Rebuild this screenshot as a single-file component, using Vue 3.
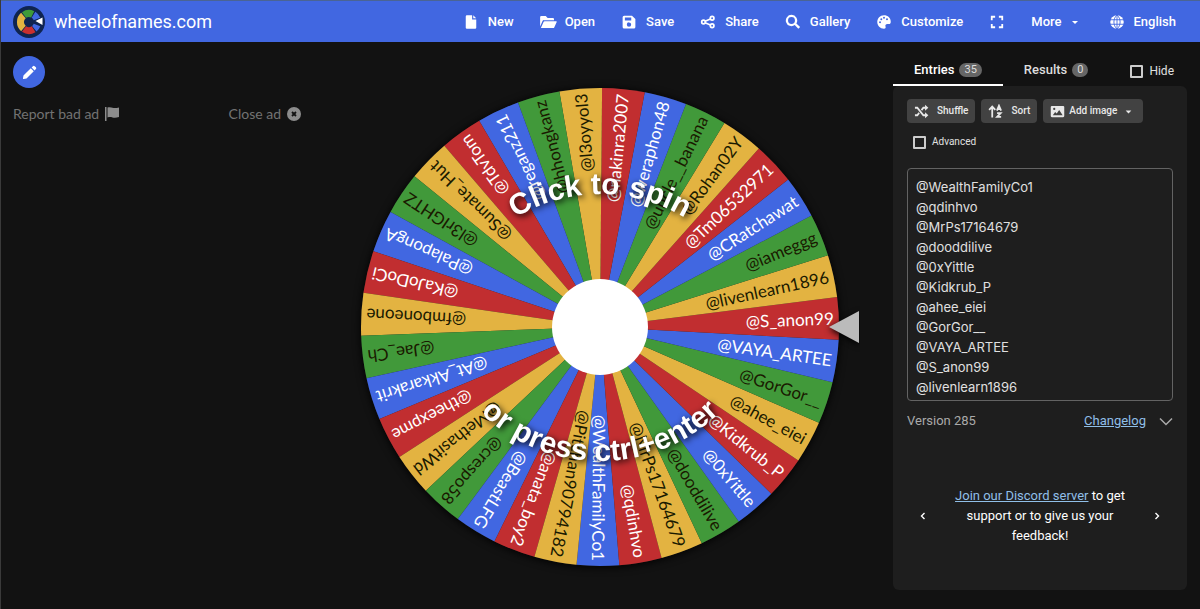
<script setup>
import { ref, computed } from 'vue'

const names = [
  '@WealthFamilyCo1', '@qdinhvo', '@MrPs17164679', '@dooddilive', '@0xYittle', '@Kidkrub_P',
  '@ahee_eiei', '@GorGor__', '@VAYA_ARTEE', '@S_anon99', '@livenlearn1896', '@iameggg',
  '@CRatchawat', '@Tm06532971', '@Rohan02Y', '@uncle__banana', '@weraphon48', '@nakinra2007',
  '@l3oyyol3', '@hhongkanz', '@reganz211', '@TdvTom', '@Sumate_Hut', '@l3rIGHTZ',
  '@PalapongA', '@KaJoDoCi', '@fmboneone', '@Jae_Ch', '@At_Akkarakrit', '@theexpme',
  '@MethasitWd', '@crespo58', '@BeastLFG', '@anata_boy2', '@Pitchan90794182'
]
const text = ref(names.join('\n'))
const entries = computed(() => text.value.split('\n').filter(Boolean))
const hidden = ref(false)
const advanced = ref(false)

const RADIUS = 239
const START = 90.5
const tones = ['blue', 'red', 'yellow', 'green']

function point(deg) {
  const a = (deg * Math.PI) / 180
  return `${(RADIUS * Math.cos(a)).toFixed(2)} ${(RADIUS * Math.sin(a)).toFixed(2)}`
}

const slices = computed(() => {
  const step = 360 / entries.value.length
  return entries.value.map((name, i) => {
    const angle = START - i * step
    return {
      name,
      tone: tones[i % 4],
      path: `M0 0L${point(angle - step / 2)}A${RADIUS} ${RADIUS} 0 0 1 ${point(angle + step / 2)}Z`,
      turn: `rotate(${angle.toFixed(3)})`
    }
  })
})

const menu = [
  { label: 'New', d: 'M6.500 3h7v5.500h5.500V19.500a1.500 1.500 0 0 1-1.500 1.500h-11a1.500 1.500 0 0 1-1.500-1.500v-15A1.500 1.500 0 0 1 6.500 3zM15 3l4 4h-4z' },
  { label: 'Open', d: 'M1.500 18V5.500A1.500 1.500 0 0 1 3 4h6l2.500 2.500h7A1.500 1.500 0 0 1 20 8v1.500H6.500a2 2 0 0 0-1.800 1.100zM2.500 20l3.700-8.200a1.500 1.500 0 0 1 1.300-.8H23a.7.7 0 0 1 .6 1l-3.300 7.200a1.500 1.500 0 0 1-1.300.8z' },
  { label: 'Save', d: 'M5.500 3.500H16l4.500 4.500v10.500a2 2 0 0 1-2 2h-13a2 2 0 0 1-2-2v-13a2 2 0 0 1 2-2zM6.500 6v4h8.500V6zM12 12.500a2.900 2.900 0 1 0 0 5.800 2.900 2.900 0 0 0 0-5.800z' },
  { label: 'Share', share: true },
  { label: 'Gallery', d: 'M10 2.500a7.500 7.500 0 1 0 4.300 13.600l4.800 5 2.400-2.400-5-4.800A7.500 7.500 0 0 0 10 2.500zm0 2.900a4.600 4.600 0 1 1 0 9.200 4.600 4.600 0 0 1 0-9.200z' },
  { label: 'Customize', d: 'M12 3C6.700 3 3 7.200 3 12s4 9 9 9c2.200 0 2.600-1.500 2-3-.7-2 .5-3.300 2.500-3.300h2.300c1.300 0 2.200-1.300 2.200-3.100C21 6.600 17 3 12 3zM6.700 11a1.300 1.300 0 1 1 0 2.600 1.300 1.300 0 0 1 0-2.600zm1.700-4a1.300 1.300 0 1 1 0 2.600 1.300 1.300 0 0 1 0-2.600zM12 5a1.300 1.300 0 1 1 0 2.600A1.300 1.300 0 0 1 12 5zm4 2a1.300 1.300 0 1 1 0 2.600A1.300 1.300 0 0 1 16 7z' }
]
</script>

<template>
  <div class="page">
    <header class="bar">
      <a class="brand" href="#">
        <svg class="logo" viewBox="-16 -16 32 32" aria-hidden="true">
          <circle r="16" fill="#0f2450" />
          <g fill="none" stroke-width="7">
            <path d="M-5 -7A8.600 8.600 0 0 1 3.700 -7.700" stroke="#3f9a3a" />
            <path d="M-5.600 6.500A8.600 8.600 0 0 1 -5.600 -6.500" stroke="#e3b341" />
            <path d="M4.600 7.300A8.600 8.600 0 0 1 -5 7" stroke="#c9302f" />
            <path d="M4.500 -7.300A8.600 8.600 0 0 1 8 -3M8 3A8.600 8.600 0 0 1 5.300 6.800" stroke="#4167e1" />
          </g>
          <path d="M6.500 -1L13.500 -4.500V3z" fill="#fff" />
        </svg>
        <span>wheelofnames.com</span>
      </a>
      <nav class="menu">
        <button v-for="item in menu" :key="item.label" type="button" class="item">
          <svg class="icon" viewBox="0 0 24 24" aria-hidden="true">
            <g v-if="item.share" fill="none" stroke="currentColor" stroke-width="2.300">
              <circle cx="6" cy="12" r="2.400" /><circle cx="17.500" cy="7" r="2.400" /><circle cx="17.500" cy="17" r="2.400" />
              <path d="M8.200 11l7-3M8.200 13l7 3" />
            </g>
            <path v-else :d="item.d" fill="currentColor" fill-rule="evenodd" />
          </svg>
          <span>{{ item.label }}</span>
        </button>
        <button type="button" class="item" aria-label="Fullscreen">
          <svg class="icon" viewBox="0 0 24 24" aria-hidden="true">
            <path d="M5 9.500V5h4.500M14.500 5H19v4.500M19 14.500V19h-4.500M9.500 19H5v-4.500" fill="none" stroke="currentColor" stroke-width="2.400" />
          </svg>
        </button>
        <button type="button" class="item more">
          <span>More</span>
          <svg class="caret" viewBox="0 0 16 16" aria-hidden="true"><path d="M5 7h6l-3 3z" fill="currentColor" /></svg>
        </button>
        <button type="button" class="item">
          <svg class="icon" viewBox="0 0 24 24" aria-hidden="true">
            <circle cx="12" cy="12" r="9" fill="currentColor" />
            <path d="M2 9h20M2 15h20M12 2v20M12 2.500c-5.500 5-5.500 14 0 19M12 2.500c5.500 5 5.500 14 0 19" fill="none" stroke="#4167e1" stroke-width="1.200" />
          </svg>
          <span>English</span>
        </button>
      </nav>
    </header>

    <main class="main">
      <section class="left">
        <button type="button" class="edit" aria-label="Edit title">
          <svg viewBox="0 0 24 24" aria-hidden="true">
            <path d="M3.500 16.200L2.800 20.200a.8.800 0 0 0 1 1l4-.8L18 10.200 13.800 6zM21 7.200a1.800 1.800 0 0 0 0-2.500L19.300 3a1.800 1.800 0 0 0-2.500 0L15 4.800 19.200 9z" fill="currentColor" />
          </svg>
        </button>
        <div class="ads">
          <a href="#">Report bad ad
            <svg viewBox="0 0 14 14" aria-hidden="true"><path d="M0 0h1.500v14H0zM2.500 .6c2-.7 3.500-.3 5 .2 2 .6 4 .3 6.500-.4v9.600c-2.500.8-4.500 1-6.500.4-2-.5-3-.5-5 0z" fill="currentColor" /></svg>
          </a>
          <a href="#">Close ad
            <svg viewBox="0 0 14 14" aria-hidden="true"><circle cx="7" cy="7" r="7" fill="currentColor" /><path d="M5 5l4 4M9 5l-4 4" stroke="#121212" stroke-width="1.800" /></svg>
          </a>
        </div>
      </section>

      <section class="stage">
        <svg class="wheel" viewBox="-260 -260 520 520" role="img" aria-label="Wheel of names">
          <defs>
            <path id="arc-top" d="M-164 31A164 164 0 0 1 164 31" />
            <path id="arc-bottom" d="M-172 -38A172 172 0 0 0 172 -38" />
          </defs>
          <circle r="239" class="disc" />
          <path v-for="s in slices" :key="'p' + s.name" :d="s.path" :class="s.tone" />
          <g v-for="s in slices" :key="'t' + s.name" :transform="s.turn">
            <text x="234" y="6" class="name" :class="'on-' + s.tone">{{ s.name }}</text>
          </g>
          <circle r="48" fill="#fff" />
          <text class="hint"><textPath href="#arc-top" startOffset="50%">Click to spin</textPath></text>
          <text class="hint"><textPath href="#arc-bottom" startOffset="50%">or press ctrl+enter</textPath></text>
          <path d="M229 0L259 -16V16z" class="pointer" />
        </svg>
      </section>

      <aside class="side">
        <div class="tabs">
          <button type="button" class="tab active">Entries <span class="badge">{{ entries.length }}</span></button>
          <button type="button" class="tab">Results <span class="badge">0</span></button>
          <label class="check hide"><input v-model="hidden" type="checkbox">Hide</label>
        </div>
        <div class="panel">
          <div class="tools">
            <button type="button" class="tool">
              <svg viewBox="0 0 16 16" aria-hidden="true"><path d="M1 4h2.500L10 12h3M1 12h2.500l2-2.500M8 6.500L10 4h3" fill="none" stroke="currentColor" stroke-width="1.900" /><path d="M11.800 .7l3.500 3.300-3.500 3.300zM11.800 8.700l3.500 3.300-3.500 3.300z" fill="currentColor" /></svg>
              Shuffle
            </button>
            <button type="button" class="tool">
              <svg viewBox="0 0 16 16" aria-hidden="true"><path d="M4.500 14.500V3M1.200 6.200l3.300-3.500 3.300 3.500M9.500 7l2.200-5.200L14 7M10.200 5.500h3M9.700 9.800h3.800l-3.800 4h4.300" fill="none" stroke="currentColor" stroke-width="1.900" /></svg>
              Sort
            </button>
            <button type="button" class="tool image">
              <svg viewBox="0 0 16 16" aria-hidden="true"><path fill-rule="evenodd" d="M2 2h12A1.200 1.200 0 0 1 15.200 3.200v9.600a1.200 1.200 0 0 1-1.200 1.200h-12A1.200 1.200 0 0 1 .8 12.800v-9.600A1.200 1.200 0 0 1 2 2zM3 12h10.500L9.800 6.500 7.200 10 5.500 8.500zM4.500 4a1.200 1.200 0 1 0 0 2.400 1.200 1.200 0 0 0 0-2.400z" fill="currentColor" /></svg>
              Add image
              <svg class="drop" viewBox="0 0 16 16" aria-hidden="true"><path d="M5 7h6l-3 3z" fill="currentColor" /></svg>
            </button>
          </div>
          <label class="check advanced"><input v-model="advanced" type="checkbox">Advanced</label>
          <textarea v-model="text" class="list" aria-label="Entries" spellcheck="false"></textarea>
          <div class="version">
            <span>Version 285</span>
            <a href="#">Changelog</a>
            <button type="button" class="plain" aria-label="Expand">
              <svg viewBox="0 0 14 14" aria-hidden="true"><path d="M1 4.500l6 6 6-6" fill="none" stroke="currentColor" stroke-width="1.500" /></svg>
            </button>
          </div>
          <div class="tip">
            <button type="button" class="plain" aria-label="Previous"><svg viewBox="0 0 14 14" aria-hidden="true"><path d="M8.500 4L5.500 7l3 3" fill="none" stroke="currentColor" stroke-width="1.400" /></svg></button>
            <p><a href="#">Join our Discord server</a> to get support or to give us your feedback!</p>
            <button type="button" class="plain" aria-label="Next"><svg viewBox="0 0 14 14" aria-hidden="true"><path d="M5.500 4l3 3-3 3" fill="none" stroke="currentColor" stroke-width="1.400" /></svg></button>
          </div>
        </div>
      </aside>
    </main>
  </div>
</template>

<style>
body {
  background: #121212;
}
</style>

<style scoped>
.page {
  min-height: 100vh;
  display: flex;
  flex-direction: column;
  box-sizing: border-box;
  border-left: 1px solid #3a3a3a;
  background: #121212;
  color: #fff;
  font-family: Roboto, sans-serif;
  font-size: 13px;
  line-height: 20px;
}
button {
  font: inherit;
  color: inherit;
  border: 0;
  background: none;
  padding: 0;
  margin: 0;
  cursor: pointer;
}
a {
  color: #90bfe8;
}
svg {
  display: block;
  flex: none;
}
.bar {
  display: flex;
  align-items: center;
  justify-content: space-between;
  height: 42px;
  padding: 0 12px;
  box-sizing: border-box;
  border-top: 1px solid #4a6494;
  background: #4167e1;
}
.brand {
  display: flex;
  align-items: center;
  gap: 9px;
  color: #fff;
  font-size: 18px;
  text-decoration: none;
}
.logo {
  width: 32px;
  height: 32px;
}
.menu {
  display: flex;
  gap: 1px;
}
.item {
  display: flex;
  align-items: center;
  gap: 8px;
  padding: 8px 12px;
  font-weight: 500;
}
.more {
  gap: 5px;
}
.icon {
  width: 18px;
  height: 18px;
}
.caret {
  width: 16px;
  height: 16px;
}
.main {
  flex: 1;
  display: grid;
  grid-template-columns: 306px 1fr 307px;
}
.left {
  padding: 14px 6px 0 12px;
}
.edit {
  display: grid;
  place-items: center;
  width: 32px;
  height: 32px;
  border-radius: 50%;
  background: #4167e1;
}
.edit svg {
  width: 17px;
  height: 17px;
}
.ads {
  display: flex;
  justify-content: space-between;
  margin-top: 16px;
}
.ads a {
  display: flex;
  align-items: center;
  gap: 6px;
  color: #727272;
  font-family: Lato, sans-serif;
  font-size: 14px;
  text-decoration: none;
}
.ads svg {
  width: 14px;
  height: 14px;
  color: #8c8c8c;
}
.stage {
  display: flex;
  align-items: center;
  justify-content: center;
  padding-top: 3px;
}
.wheel {
  width: 100%;
  max-width: 520px;
}
.disc {
  fill: #222;
  filter: drop-shadow(0 1px 4px #000);
}
.blue { fill: #4167e1; }
.red { fill: #c12e30; }
.yellow { fill: #e3b341; }
.green { fill: #41993a; }
.name {
  font-family: Lato, sans-serif;
  font-size: 17px;
  text-anchor: end;
}
.on-blue, .on-red { fill: #fff; }
.on-yellow, .on-green { fill: #1a1a00; }
.hint {
  fill: #fff;
  font-family: "Liberation Sans", Arial, sans-serif;
  font-weight: 700;
  font-size: 30px;
  text-anchor: middle;
  filter: drop-shadow(2px 2px 3px #000);
}
.pointer {
  fill: #bbb;
  filter: drop-shadow(0 2px 3px #000);
}
.side {
  display: flex;
  flex-direction: column;
  padding: 14px 13px 19px 0;
}
.tabs {
  display: flex;
  align-items: stretch;
  height: 30px;
}
.tab {
  display: flex;
  align-items: center;
  gap: 5px;
  padding: 0 21px;
  border-bottom: 2px solid transparent;
  font-weight: 500;
  color: #ddd;
}
.tab.active {
  color: #fff;
  border-color: #fff;
}
.badge {
  padding: 0 5px;
  border-radius: 7px;
  background: #666;
  color: #ddd;
  font-size: 11px;
  font-weight: 400;
  line-height: 14px;
}
.check {
  display: flex;
  align-items: center;
  gap: 6px;
  color: #e0e0e0;
}
.check input {
  appearance: none;
  box-sizing: border-box;
  width: 13px;
  height: 13px;
  margin: 0;
  border: 2px solid #ccc;
  border-radius: 1px;
}
.hide {
  margin-left: auto;
  padding-right: 13px;
  font-size: 12px;
}
.panel {
  flex: 1;
  display: flex;
  flex-direction: column;
  padding: 13px 14px;
  border-radius: 6px;
  background: #1e1e1e;
}
.tools {
  display: flex;
  gap: 6px;
}
.tool {
  display: flex;
  align-items: center;
  gap: 8px;
  height: 24px;
  padding: 0 7px;
  border-radius: 4px;
  background: #424242;
  color: #e8e8e8;
  font-size: 10px;
  font-weight: 500;
}
.tool.image {
  gap: 4px;
}
.tool svg {
  width: 15px;
  height: 15px;
}
.advanced {
  margin: 9px 6px 16px;
  font-size: 10px;
}
.list {
  box-sizing: border-box;
  width: 100%;
  height: 233px;
  padding: 8px;
  border: 1px solid #636363;
  border-radius: 4px;
  background: transparent;
  color: #e0e0e0;
  font-family: Inter, sans-serif;
  font-size: 13px;
  line-height: 20px;
  resize: none;
  scrollbar-width: none;
  outline: none;
}
.version {
  display: flex;
  align-items: center;
  gap: 13px;
  margin-top: 10px;
  color: #aaa;
}
.version span {
  flex: 1;
}
.version svg, .tip svg {
  width: 14px;
  height: 14px;
}
.tip {
  display: flex;
  align-items: center;
  justify-content: space-between;
  margin-top: 55px;
  padding: 0 9px;
}
.tip p {
  max-width: 190px;
  margin: 0;
  text-align: center;
}
</style>
